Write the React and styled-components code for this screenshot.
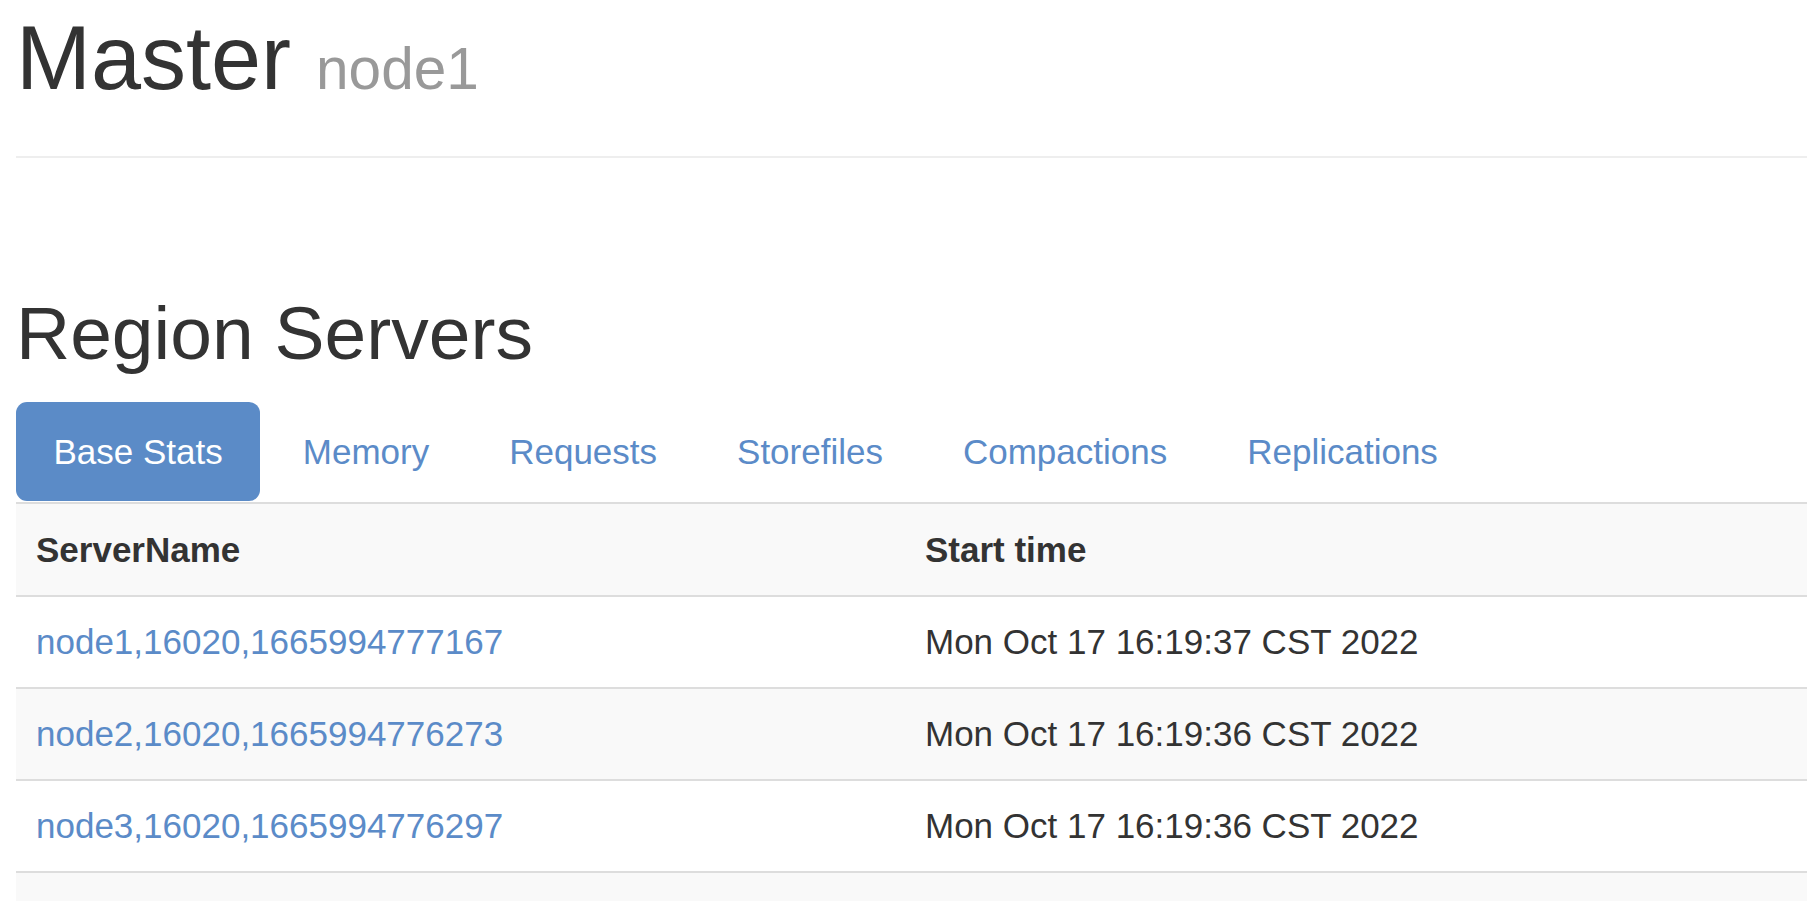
import React from "react";
import styled, { createGlobalStyle } from "styled-components";

const GlobalStyle = createGlobalStyle`
  html, body {
    margin: 0;
    padding: 0;
    background: #ffffff;
    overflow: hidden;
  }
  body {
    font-family: "Liberation Sans", Arial, Helvetica, sans-serif;
    font-size: 35px;
    line-height: 50px;
    color: #333333;
  }
  * { box-sizing: border-box; }
`;

const Page = styled.div`
  padding: 9px 0 0 16px;
`;

const PageHeader = styled.header`
  padding-bottom: 22px;
  border-bottom: 2px solid #eeeeee;
`;

const Title = styled.h1`
  margin: 0 0 26px;
  font-size: 90px;
  line-height: 99px;
  font-weight: 500;
  color: #333333;
`;

const Sub = styled.small`
  font-size: 58.5px;
  line-height: 1;
  font-weight: 400;
  color: #999999;
`;

const SectionTitle = styled.h2`
  margin: 134px 0 27px;
  font-size: 75px;
  line-height: 82.5px;
  font-weight: 500;
  color: #333333;
`;

const Tabs = styled.ul`
  display: flex;
  margin: 0;
  padding: 0 0 1px;
  list-style: none;
  border-bottom: 2.5px solid #dddddd;
`;

const Tab = styled.li`
  margin-right: 5px;
`;

const TabLink = styled.a`
  display: block;
  height: 99px;
  padding: 25px 37.5px 0;
  line-height: 50px;
  border-radius: 11px;
  text-decoration: none;
  white-space: nowrap;
  color: ${(p) => (p.$active ? "#ffffff" : "#5b8bc8")};
  background: ${(p) => (p.$active ? "#5b8bc7" : "transparent")};
`;

const Table = styled.table`
  width: 100%;
  border-collapse: collapse;
  border-spacing: 0;
`;

const Row = styled.tr`
  background: ${(p) => (p.$striped ? "#f9f9f9" : "#ffffff")};
  border-bottom: 2px solid #dddddd;
`;

const HeadCell = styled.th`
  height: 91px;
  padding: 21px 20px 20px;
  text-align: left;
  vertical-align: top;
  font-weight: 700;
  line-height: 50px;
  color: #333333;
  width: ${(p) => p.$width || "auto"};
`;

const Cell = styled.td`
  height: 90px;
  padding: 20px;
  vertical-align: top;
  line-height: 50px;
  color: #333333;
`;

const ServerLink = styled.a`
  color: #5b8bc8;
  text-decoration: none;
`;

const tabs = ["Base Stats", "Memory", "Requests", "Storefiles", "Compactions", "Replications"];

const servers = [
  { name: "node1,16020,1665994777167", start: "Mon Oct 17 16:19:37 CST 2022" },
  { name: "node2,16020,1665994776273", start: "Mon Oct 17 16:19:36 CST 2022" },
  { name: "node3,16020,1665994776297", start: "Mon Oct 17 16:19:36 CST 2022" },
];

export default function App() {
  return (
    <>
      <GlobalStyle />
      <Page>
        <PageHeader>
          <Title>
            Master <Sub>node1</Sub>
          </Title>
        </PageHeader>

        <SectionTitle>Region Servers</SectionTitle>

        <Tabs>
          {tabs.map((t, i) => (
            <Tab key={t}>
              <TabLink href="#" $active={i === 0}>
                {t}
              </TabLink>
            </Tab>
          ))}
        </Tabs>

        <Table>
          <tbody>
            <Row $striped>
              <HeadCell $width="889px">ServerName</HeadCell>
              <HeadCell>Start time</HeadCell>
            </Row>
            {servers.map((s, i) => (
              <Row key={s.name} $striped={i % 2 === 1}>
                <Cell>
                  <ServerLink href="#">{s.name}</ServerLink>
                </Cell>
                <Cell>{s.start}</Cell>
              </Row>
            ))}
            <Row $striped>
              <Cell />
              <Cell />
            </Row>
          </tbody>
        </Table>
      </Page>
    </>
  );
}
